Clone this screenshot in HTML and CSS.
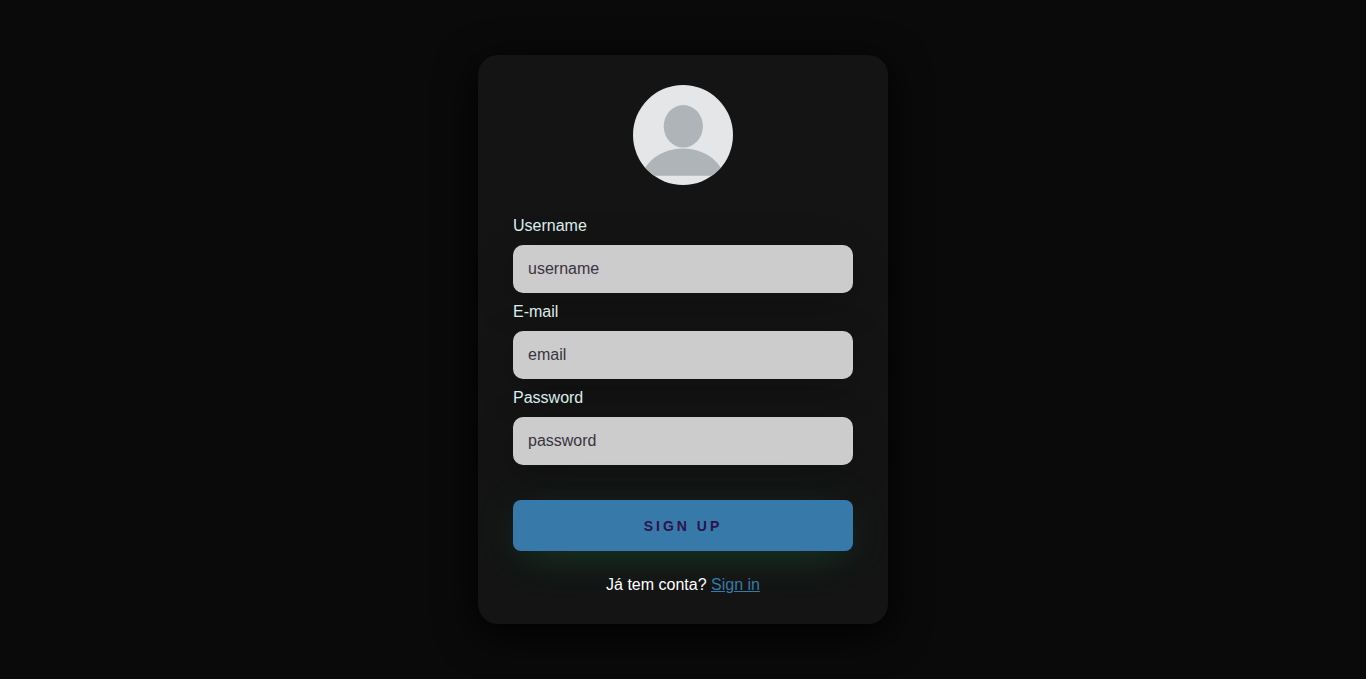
FILE: index.html
```html
<!DOCTYPE html>
<html lang="pt-BR">
<head>
  <meta charset="UTF-8">
  <meta name="viewport" content="width=device-width, initial-scale=1">
  <title>Sign up</title>
  <link rel="stylesheet" href="styles.css">
</head>
<body>
  <main class="page">
    <form class="card">
      <svg class="avatar" viewBox="0 0 100 100" aria-hidden="true">
        <defs>
          <clipPath id="avatar-clip"><circle cx="50" cy="50" r="50"/></clipPath>
        </defs>
        <g clip-path="url(#avatar-clip)">
          <rect width="100" height="100" fill="#e4e6e7"/>
          <ellipse cx="50.3" cy="41.3" rx="19.6" ry="21.2" fill="#aeb4b7"/>
          <path d="M9 90.7C13 75 30 63.5 50 63.5S87 75 91 90.7Z" fill="#aeb4b7"/>
        </g>
      </svg>
      <div class="field">
        <label for="username">Username</label>
        <input id="username" type="text" placeholder="username">
      </div>
      <div class="field">
        <label for="email">E-mail</label>
        <input id="email" type="email" placeholder="email">
      </div>
      <div class="field">
        <label for="password">Password</label>
        <input id="password" type="password" placeholder="password">
      </div>
      <button class="submit" type="submit">SIGN UP</button>
      <p class="signin">Já tem conta? <a href="#signin">Sign in</a></p>
    </form>
  </main>
</body>
</html>
```

FILE: styles.css
```css
* {
  box-sizing: border-box;
}

body {
  margin: 0;
  background: #0a0a0a;
  font: 16px/18px "Liberation Sans", Arial, sans-serif;
}

.page {
  min-height: 100vh;
  display: flex;
  align-items: center;
  justify-content: center;
}

.card {
  width: 100%;
  max-width: 410px;
  display: flex;
  flex-direction: column;
  padding: 30px 35px;
  border-radius: 20px;
  background: #141414;
  box-shadow: 0 10px 40px #000;
}

.avatar {
  width: 100px;
  height: 100px;
  align-self: center;
  margin-bottom: 22px;
}

.field {
  display: flex;
  flex-direction: column;
  gap: 10px;
  margin-top: 10px;
}

.field label {
  color: #dff0f0;
}

.field input {
  width: 100%;
  height: 48px;
  padding: 0 15px;
  border: 0;
  border-radius: 10px;
  outline: none;
  background: #ccc;
  color: #333;
  font: inherit;
  box-shadow: 0 10px 40px #00000038;
}

.field input::placeholder {
  color: #3a3340;
  opacity: 1;
}

.submit {
  height: 51px;
  margin-top: 35px;
  border: 0;
  border-radius: 8px;
  background: #377aaa;
  color: #2b134b;
  font: 800 14px/16px "Liberation Sans", Arial, sans-serif;
  letter-spacing: 3px;
  box-shadow: 0 10px 40px -12px #00ff8034, 0 5px 60px #80d0b00e;
  cursor: pointer;
}

.signin {
  margin: 25px 0 0;
  color: #fff;
  text-align: center;
}

.signin a {
  color: #377aaa;
}
```
